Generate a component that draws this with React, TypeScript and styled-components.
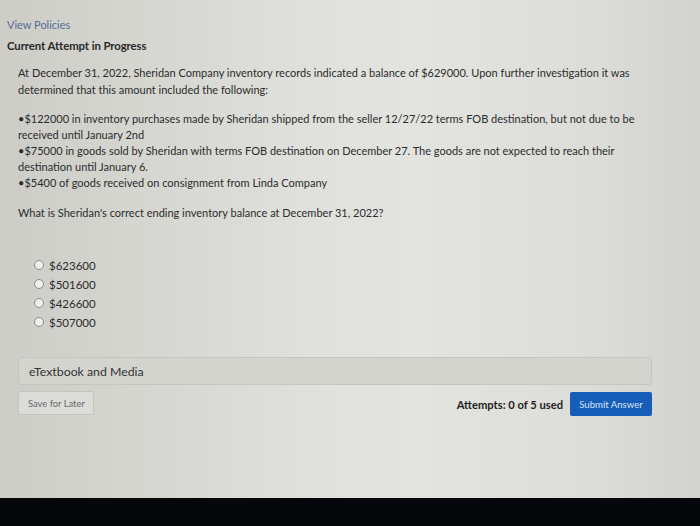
import React from "react";
import styled, { createGlobalStyle } from "styled-components";

const Global = createGlobalStyle`
  html, body { margin: 0; padding: 0; }
  body { background: #050608; font-family: Lato, "Noto Sans", sans-serif; }
`;

const Screen = styled.div`
  width: 700px;
  height: 526px;
  display: flex;
  flex-direction: column;
  overflow: hidden;
`;

const Page = styled.div`
  height: 498px;
  background: linear-gradient(90deg, #cdccc7 0%, #d6d6d1 20%, #e0e0dc 45%, #e3e3df 60%, #dcdcd8 85%, #d2d2ce 100%);
  display: flex;
  flex-direction: column;
`;

const Bottom = styled.div`
  flex: 1;
  background: #06070a;
`;

const TopBar = styled.div`
  padding: 18px 7px 0;
  display: flex;
  flex-direction: column;
  gap: 7px;
`;

const Link = styled.a`
  color: #566c98;
  font-size: 11px;
  text-decoration: none;
  line-height: 14px;
`;

const Heading = styled.div`
  color: #2a2a2a;
  font-size: 11.4px;
  font-weight: 700;
  line-height: 14px;
  letter-spacing: -0.1px;
`;

const Content = styled.div`
  padding: 11px 40px 0 18px;
  color: #2c2c2c;
  font-size: 11px;
`;

const Para = styled.p`
  margin: 0;
  line-height: 17px;
`;

const Bullets = styled.div`
  margin-top: 13px;
  line-height: 16px;
`;

const Question = styled.p`
  margin: 13px 0 0;
  line-height: 17px;
  font-size: 11px;
`;

const Options = styled.div`
  margin: 37px 0 0 16px;
  display: flex;
  flex-direction: column;
  gap: 5px;
`;

const Option = styled.label`
  display: flex;
  align-items: center;
  gap: 5px;
  font-size: 11.5px;
  height: 14px;
`;

const Radio = styled.span`
  width: 10px;
  height: 10px;
  border-radius: 50%;
  border: 1px solid #8a8a8a;
  background: #efefec;
  box-sizing: border-box;
`;

const Media = styled.div`
  margin-top: 28px;
  width: 634px;
  height: 28px;
  box-sizing: border-box;
  border: 1px solid #c6c6c1;
  border-radius: 3px;
  background: #d4d4cf;
  display: flex;
  align-items: center;
  padding-left: 10px;
  font-size: 12.3px;
  color: #333;
`;

const Actions = styled.div`
  margin-top: 6px;
  width: 634px;
  display: flex;
  align-items: flex-start;
  justify-content: space-between;
`;

const SaveButton = styled.button`
  width: 76px;
  height: 24px;
  border: 1px solid #c4c4bf;
  border-radius: 2px;
  background: #dcdcd8;
  color: #6b6b6b;
  font-family: Lato, "Noto Sans", sans-serif;
  font-size: 9.4px;
  text-align: left;
  padding: 0 0 0 9px;
`;

const Right = styled.div`
  display: flex;
  align-items: center;
  gap: 7px;
  margin-top: 1px;
`;

const Attempts = styled.span`
  font-weight: 700;
  font-size: 11.2px;
  color: #1e1e1e;
`;

const SubmitButton = styled.button`
  width: 82px;
  height: 24px;
  border: none;
  border-radius: 2px;
  background: #165eb8;
  color: #d8e4f4;
  font-family: Lato, "Noto Sans", sans-serif;
  font-size: 9.6px;
  padding: 0;
`;

const options = ["$623600", "$501600", "$426600", "$507000"];

export default function App() {
  return (
    <Screen>
      <Global />
      <Page>
        <TopBar>
          <Link href="#">View Policies</Link>
          <Heading>Current Attempt in Progress</Heading>
        </TopBar>
        <Content>
          <Para>
            At December 31, 2022, Sheridan Company inventory records indicated a balance of $629000. Upon further
            investigation it was determined that this amount included the following:
          </Para>
          <Bullets>
            •$122000 in inventory purchases made by Sheridan shipped from the seller 12/27/22 terms FOB destination, but not due to be received until January 2nd
            <br />•$75000 in goods sold by Sheridan with terms FOB destination on December 27. The goods are not expected to reach their destination until January 6.
            <br />•$5400 of goods received on consignment from Linda Company
          </Bullets>
          <Question>What is Sheridan's correct ending inventory balance at December 31, 2022?</Question>
          <Options>
            {options.map((o) => (
              <Option key={o}>
                <Radio />
                {o}
              </Option>
            ))}
          </Options>
          <Media>eTextbook and Media</Media>
          <Actions>
            <SaveButton>Save for Later</SaveButton>
            <Right>
              <Attempts>Attempts: 0 of 5 used</Attempts>
              <SubmitButton>Submit Answer</SubmitButton>
            </Right>
          </Actions>
        </Content>
      </Page>
      <Bottom />
    </Screen>
  );
}
